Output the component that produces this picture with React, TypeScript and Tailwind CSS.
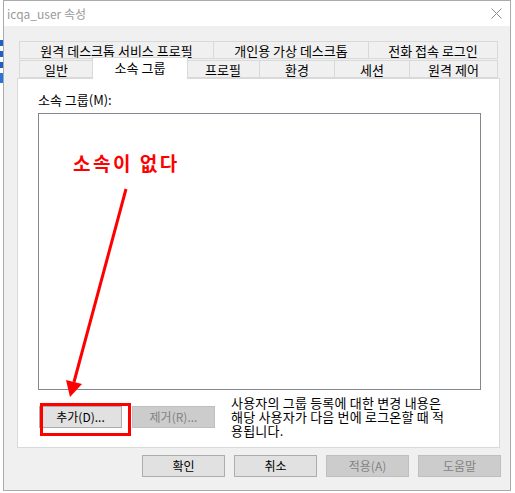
const btn = "w-[83px] h-[22px] flex items-center justify-center border text-[12px] leading-none";
const enabledBtn = `${btn} bg-[#e1e1e1] border-[#adadad] text-black`;
const disabledBtn = `${btn} bg-[#cccccc] border-[#bfbfbf] text-[#838383]`;

const Tab = ({ label, w, active }: { label: string; w: number; active?: boolean }) => (
    <div
        style={{ width: w }}
        className={
            active
                ? "relative z-10 h-[22px] -mb-[1px] -ml-[1px] -mr-[1px] flex items-start justify-center pt-[2px] bg-white border border-b-0 border-[#d9d9d9] text-[13px] leading-[16px]"
                : "h-[18px] -ml-[1px] first:ml-0 flex items-center justify-center bg-[#f0f0f0] border border-[#d9d9d9] text-[13px] leading-none"
        }
    >
        {label}
    </div>
);

export default function App() {
    return (
        <div
            className="relative w-[515px] h-[493px] overflow-hidden bg-white flex text-black"
            style={{ fontFamily: '"Noto Sans CJK KR", "Noto Sans", sans-serif' }}
        >
            {/* desktop icons peeking out on the left */}
            <div className="w-[3px] flex flex-col pt-[40px] gap-[5px]">
                <div className="h-[6px] bg-[#1e5fc8]" />
                <div className="h-[6px] bg-[#1e5fc8]" />
                <div className="h-[6px] bg-[#1e5fc8]" />
                <div className="h-[10px] bg-[#2a74d8]" />
            </div>

            <div className="w-[508px] h-[491px] border border-[#aaaaaa] bg-[#f0f0f0] flex flex-col">
                {/* title bar */}
                <div className="h-[25px] bg-white flex items-center justify-between pl-[3px] pr-[8px]">
                    <span className="text-[12px] text-[#9a9a9a]">icqa_user 속성</span>
                    <svg width="11" height="11" viewBox="0 0 11 11">
                        <path d="M0.5 0.5 L10.5 10.5 M10.5 0.5 L0.5 10.5" stroke="#8a8a8a" strokeWidth="1" />
                    </svg>
                </div>

                <div className="flex flex-col pl-[13px] pt-[15px]">
                    {/* tabs */}
                    <div className="flex ml-[2px]">
                        <Tab label="원격 데스크톱 서비스 프로필" w={195} />
                        <Tab label="개인용 가상 데스크톱" w={156} />
                        <Tab label="전화 접속 로그인" w={130} />
                    </div>
                    <div className="flex items-end ml-[2px] h-[19px]">
                        <Tab label="일반" w={74} />
                        <Tab label="소속 그룹" w={96} active />
                        <Tab label="프로필" w={74} />
                        <Tab label="환경" w={76} />
                        <Tab label="세션" w={76} />
                        <Tab label="원격 제어" w={89} />
                    </div>

                    {/* panel */}
                    <div className="w-[483px] h-[370px] bg-white border border-[#d9d9d9] pl-[20px] pt-[13px] flex flex-col">
                        <div className="text-[13px] leading-[16px]">소속 그룹(M):</div>
                        <div className="mt-[5px] w-[443px] h-[277px] border border-[#828790] bg-white pl-[34px] pt-[38px]">
                            <span className="text-[19px] font-bold text-[#ff0000] leading-none tracking-[2.5px]">소속이 없다</span>
                        </div>
                        <div className="flex items-start mt-[16px] ml-[1px]">
                            <div className={enabledBtn}>추가(D)...</div>
                            <div className={`${disabledBtn} ml-[10px]`}>제거(R)...</div>
                            <div className="ml-[16px] -mt-[10px] text-[13px] leading-[14px] tracking-[0.2px]">
                                사용자의 그룹 등록에 대한 변경 내용은
                                <br />
                                해당 사용자가 다음 번에 로그온할 때 적
                                <br />
                                용됩니다.
                            </div>
                        </div>
                    </div>

                    {/* dialog buttons */}
                    <div className="flex justify-end gap-[9px] mt-[7px] w-[484px]">
                        <div className={enabledBtn}>확인</div>
                        <div className={enabledBtn}>취소</div>
                        <div className={disabledBtn}>적용(A)</div>
                        <div className={disabledBtn}>도움말</div>
                    </div>
                </div>
            </div>

            {/* red annotation */}
            <svg className="absolute inset-0 pointer-events-none" width="515" height="493">
                <line x1="126" y1="189" x2="74" y2="382" stroke="#ff0000" strokeWidth="3" />
                <polygon points="70,397 82,384 66,380" fill="#ff0000" />
                <rect x="41.5" y="404.5" width="88" height="30" fill="none" stroke="#ff0000" strokeWidth="3" />
            </svg>
        </div>
    );
}
